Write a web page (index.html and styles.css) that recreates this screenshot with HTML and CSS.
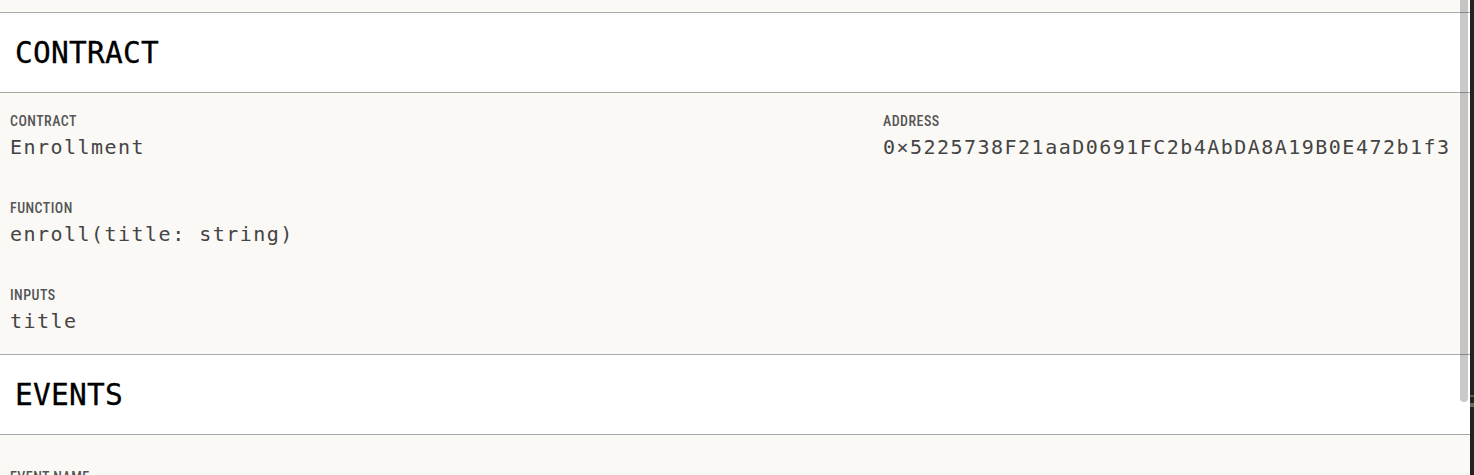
FILE: index.html
```html
<!DOCTYPE html>
<html lang="en">
<head>
<meta charset="utf-8">
<title>Contract</title>
<link rel="stylesheet" href="styles.css">
</head>
<body>
<div class="window">
  <div class="page">
    <div class="top-strip"></div>
    <header class="section-head"><h2 class="section-title">CONTRACT</h2></header>
    <section class="section-body contract">
      <div class="field">
        <div class="label">CONTRACT</div>
        <div class="value">Enrollment</div>
      </div>
      <div class="field">
        <div class="label">ADDRESS</div>
        <div class="value">0×5225738F21aaD0691FC2b4AbDA8A19B0E472b1f3</div>
      </div>
      <div class="field">
        <div class="label">FUNCTION</div>
        <div class="value">enroll(title: string)</div>
      </div>
      <div class="field"></div>
      <div class="field">
        <div class="label">INPUTS</div>
        <div class="value">title</div>
      </div>
    </section>
    <header class="section-head"><h2 class="section-title">EVENTS</h2></header>
    <section class="section-body events">
      <div class="field">
        <div class="label">EVENT NAME</div>
        <div class="value">Enrolled</div>
      </div>
    </section>
    <div class="scroll-thumb"></div>
  </div>
  <div class="outside">
    <span class="outside-mark m1"></span>
    <span class="outside-mark m2"></span>
  </div>
</div>
</body>
</html>
```

FILE: styles.css
```css
html, body {
  margin: 0;
  padding: 0;
  height: 100%;
  overflow: hidden;
}
body {
  background: #faf9f6;
}
.window {
  display: flex;
  height: 475px;
  overflow: hidden;
}
.page {
  position: relative;
  width: 1470px;
  flex: none;
  background: #faf9f6;
  overflow: hidden;
}
.outside {
  flex: 1;
  background: #222222;
  position: relative;
}
.outside-mark {
  position: absolute;
  left: 0;
  right: 0;
  background: #5a5a4e;
}
.outside-mark.m1 { top: 395px; height: 2px; }
.outside-mark.m2 { top: 403px; height: 4px; background: #6a6a5c; }

.top-strip {
  height: 12px;
  border-bottom: 1px solid #a9a9a9;
}
.section-head {
  background: #ffffff;
  border-bottom: 1px solid #a9a9a9;
  padding: 23px 15px 21px;
}
.section-title {
  margin: 0;
  font-family: "DejaVu Sans Mono", "Liberation Mono", monospace;
  font-weight: normal;
  font-size: 29.5px;
  line-height: 35px;
  letter-spacing: 0.25px;
  color: #000000;
  -webkit-text-stroke: 0.3px #000000;
}
.section-body {
  display: grid;
  grid-template-columns: 873px 1fr;
  row-gap: 41px;
  padding: 20px 10px 21px;
  border-bottom: 1px solid #a9a9a9;
}
.section-body.events {
  padding-top: 34px;
  border-bottom: none;
}
.field {
  display: flex;
  flex-direction: column;
  gap: 6px;
}
.label {
  font-family: Roboto, "Liberation Sans", sans-serif;
  font-stretch: 80%;
  font-weight: 500;
  font-size: 14px;
  line-height: 16px;
  letter-spacing: 0.45px;
  color: #555555;
}
.value {
  font-family: "DejaVu Sans Mono", "Liberation Mono", monospace;
  font-size: 20px;
  line-height: 24px;
  letter-spacing: 1.47px;
  color: #444444;
  white-space: nowrap;
}
.scroll-thumb {
  position: absolute;
  top: 0;
  left: 1460px;
  width: 8px;
  height: 402px;
  background: rgba(0, 0, 0, 0.21);
  border-radius: 0 0 4px 4px;
}
```
